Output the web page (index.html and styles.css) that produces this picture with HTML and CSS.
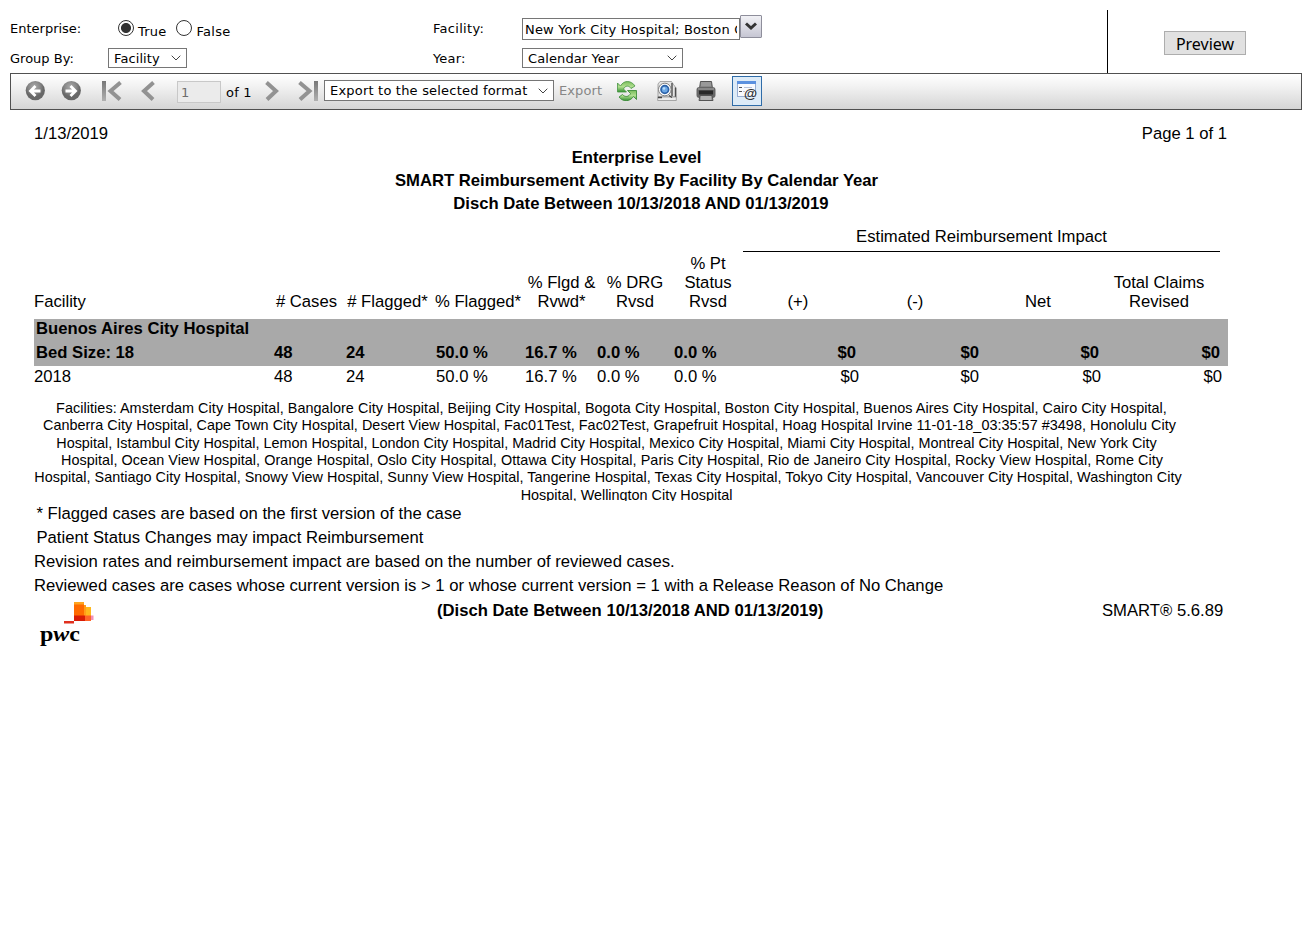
FILE: index.html
```html
<!DOCTYPE html>
<html lang="en">
<head>
<meta charset="utf-8">
<title>SMART Reimbursement Activity</title>
<link rel="stylesheet" href="styles.css">
</head>
<body>
<section class="params">
  <div class="param-col first">
    <div class="param-row"><span class="label">Enterprise:</span>
      <span class="radio on"></span><span class="radio-text">True</span>
      <span class="radio second"></span><span class="radio-text false">False</span></div>
    <div class="param-row"><span class="label">Group By:</span>
      <span class="select group">Facility<svg class="chev" viewBox="0 0 10 6"><path d="M.7.7 5 5 9.3.7"/></svg></span></div>
  </div>
  <div class="param-col middle">
    <div class="param-row"><span class="label wide">Facility:</span>
      <span class="textbox"><span class="clip">New York City Hospital; Boston City</span></span><span class="drop"><svg viewBox="0 0 14 10"><path d="M2 2.500 7 7 12 2.500" /></svg></span></div>
    <div class="param-row"><span class="label">Year:</span>
      <span class="select year">Calendar Year<svg class="chev" viewBox="0 0 10 6"><path d="M.7.7 5 5 9.3.7"/></svg></span></div>
  </div>
  <div class="param-col action"><button class="preview">Preview</button></div>
</section>

<nav class="toolbar">
  <svg class="ico back" viewBox="0 0 20 20"><defs><radialGradient id="ball" cx="45%" cy="30%"><stop offset="0" stop-color="#aaa"/><stop offset=".65" stop-color="#858585"/><stop offset="1" stop-color="#686868"/></radialGradient>
    <linearGradient id="bar" x2="0" y2="1"><stop offset="0" stop-color="#777"/><stop offset="1" stop-color="#b0b0b0"/></linearGradient></defs>
    <circle cx="10.300" cy="9.600" r="9.6" fill="url(#ball)"/><path class="arrow" d="M15.5 10H6M10.5 5 5.5 10l5 5"/></svg>
  <svg class="ico fwd" viewBox="0 0 20 20"><circle cx="10.300" cy="9.600" r="9.6" fill="url(#ball)"/><path class="arrow" d="M4.500 10H14M9.500 5l5 5-5 5"/></svg>
  <svg class="ico first-page" viewBox="0 0 20 20"><path d="M0 0h4v20H0z" fill="url(#bar)"/><path d="M18.500 1.500 8.500 10l9.500 8.500" class="thick"/></svg>
  <svg class="ico prev-page" viewBox="0 0 14 20"><path d="M12.500 1.500 3 10l9 8.500" class="thick"/></svg>
  <span class="page-box">1</span><span class="of">of 1</span>
  <svg class="ico next-page" viewBox="0 0 14 20"><path d="M1.500 1.500 11 10l-9 8.500" class="thick"/></svg>
  <svg class="ico last-page" viewBox="0 0 20 20"><path d="M16 0h4v20h-4z" fill="url(#bar)"/><path d="M1.500 1.500 11.500 10 2 18.500" class="thick"/></svg>
  <span class="select format">Export to the selected format<svg class="chev" viewBox="0 0 10 6"><path d="M.7.7 5 5 9.3.7"/></svg></span>
  <span class="export">Export</span>
  <svg class="ico refresh" viewBox="0 0 20 20"><defs><linearGradient id="grn" x2="0" y2="1"><stop offset="0" stop-color="#79bd5b"/><stop offset=".5" stop-color="#b2df91"/><stop offset="1" stop-color="#329031"/></linearGradient></defs>
    <path d="M.5 2v9h9L6.500 8C8 4.500 12 4 14 7.500L18 5C14.500-.5 7-1.500 3.500 5z" fill="url(#grn)" stroke="#479443" stroke-width=".8"/><path d="M19.500 18.500v-9h-9l3 3c-1.500 3.500-5.500 4-8 1L2 16c3.500 5 11 5 14.500-.5z" fill="url(#grn)" stroke="#31852f" stroke-width=".8"/></svg>
  <svg class="ico pv" viewBox="0 0 20 20"><path d="M3 .5h11.500l2 3L19 7v9H1V3z" fill="#e4e4e4" stroke="#888" stroke-width=".7"/><path d="M15 2v13M18.500 6.500v10" fill="none" stroke="#4d4d4d" stroke-width="1.400"/><circle cx="7.800" cy="8.500" r="6.300" fill="#fff" stroke="#777" stroke-width=".9"/><circle cx="7.800" cy="8.500" r="3.800" fill="#6ca8e6" stroke="#2c62a8" stroke-width="1.700"/><circle cx="7" cy="7.500" r="1.300" fill="#b9dcfb"/><path d="M.7 16h18.600v3.500H.7z" fill="#ececec" stroke="#888" stroke-width=".7"/><path d="M1 16.500h4M12 14.500l3 2" stroke="#444" stroke-width="1.300"/></svg>
  <svg class="ico print" viewBox="0 0 20 20"><path d="M4.500.5h11l1 7h-13z" fill="#888" stroke="#555"/><path d="M5 2h10M5 4h10" stroke="#aaa"/><rect x=".5" y="6" width="19" height="11" rx="3" fill="#666"/><path d="M2 8h16" stroke="#aaa"/><path d="M3 9.500h14v4H3z" fill="#292929"/><path d="M4 14.500h12l1 5H3z" fill="#999" stroke="#555"/><path d="M5 16h10M5 18h10" stroke="#ccc"/></svg>
  <span class="toggle"><svg viewBox="0 0 22 22"><rect x="1.500" y="1.500" width="18" height="15" fill="#f8fafe" stroke="#99afd4"/><path d="M1 1h19v3H1z" fill="#5b91df"/><path d="M3 7.500h3M3 11.500h3" stroke="#555" stroke-width="1.200"/><path d="M8 7.500h8M7 11.500h2" stroke="#b7c3db"/><text x="8" y="18" class="at">@</text></svg></span>
</nav>

<main class="report">
  <div class="dateline"><span>1/13/2019</span><span>Page 1 of 1</span></div>
  <div class="titles"><div>Enterprise Level</div><div>SMART Reimbursement Activity By Facility By Calendar Year</div><div class="period">Disch Date Between 10/13/2018 AND 01/13/2019</div></div>
  <div class="impact">Estimated Reimbursement Impact</div>
  <div class="heads">
    <span class="left">Facility</span><span># Cases</span><span># Flagged*</span><span>% Flagged*</span><span>% Flgd &amp;<br>Rvwd*</span><span>% DRG<br>Rvsd</span><span>% Pt<br>Status<br>Rvsd</span><span>(+)</span><span>(-)</span><span>Net</span><span>Total Claims<br>Revised</span>
  </div>
  <div class="band">
    <div class="hospital">Buenos Aires City Hospital</div>
    <div class="data"><span class="bed">Bed Size: 18</span><span>48</span><span>24</span><span>50.0 %</span><span>16.7 %</span><span>0.0 %</span><span>0.0 %</span><span class="num">$0</span><span class="num">$0</span><span class="num">$0</span><span class="num">$0</span></div>
  </div>
  <div class="data plain"><span>2018</span><span>48</span><span>24</span><span>50.0 %</span><span>16.7 %</span><span>0.0 %</span><span>0.0 %</span><span class="num">$0</span><span class="num">$0</span><span class="num">$0</span><span class="num">$0</span></div>
  <div class="facilities">
    <div class="l1">Facilities: Amsterdam City Hospital, Bangalore City Hospital, Beijing City Hospital, Bogota City Hospital, Boston City Hospital, Buenos Aires City Hospital, Cairo City Hospital,</div>
    <div class="l2">Canberra City Hospital, Cape Town City Hospital, Desert View Hospital, Fac01Test, Fac02Test, Grapefruit Hospital, Hoag Hospital Irvine 11-01-18_03:35:57 #3498, Honolulu City</div>
    <div class="l3">Hospital, Istambul City Hospital, Lemon Hospital, London City Hospital, Madrid City Hospital, Mexico City Hospital, Miami City Hospital, Montreal City Hospital, New York City</div>
    <div class="l4">Hospital, Ocean View Hospital, Orange Hospital, Oslo City Hospital, Ottawa City Hospital, Paris City Hospital, Rio de Janeiro City Hospital, Rocky View Hospital, Rome City</div>
    <div class="l5">Hospital, Santiago City Hospital, Snowy View Hospital, Sunny View Hospital, Tangerine Hospital, Texas City Hospital, Tokyo City Hospital, Vancouver City Hospital, Washington City</div>
    <div class="l6">Hospital, Wellington City Hospital</div>
  </div>
  <div class="notes"><p class="in">* Flagged cases are based on the first version of the case</p><p class="in">Patient Status Changes may impact Reimbursement</p><p>Revision rates and reimbursement impact are based on the number of reviewed cases.</p><p>Reviewed cases are cases whose current version is &gt; 1 or whose current version = 1 with a Release Reason of No Change</p></div>
  <footer class="foot">
    <svg class="logo" viewBox="0 0 60 46"><path d="M30 0h10v19H30z" fill="#ff6a00"/><path d="M30 0h10v2.500H30z" fill="#ffa51f"/><path d="M40 3h2v16h-2z" fill="#ff9d18"/><path d="M42 5h5v10h-5z" fill="#ffb81c"/><path d="M30 13.500h11V19H30z" fill="#d91c05"/><path d="M41 13.500h6V19h-6z" fill="#ff6328"/><path d="M47 13.500h2.500V18H47z" fill="#f391b8"/><path d="M20 19h10v2.500H20z" fill="#e0301e"/><text x="-4" y="38.500" class="pwc" textLength="40" lengthAdjust="spacingAndGlyphs">p<tspan class="slant">w</tspan>c</text></svg>
    <span class="range">(Disch Date Between 10/13/2018 AND 01/13/2019)</span>
    <span class="version">SMART® 5.6.89</span>
  </footer>
</main>
</body>
</html>
```
FILE: styles.css
```css
* { box-sizing: border-box; }
body { margin: 0; width: 1312px; height: 937px; overflow: hidden; background: #fff; color: #000; font: 13px "DejaVu Sans", sans-serif; }
.params { display: flex; height: 73px; padding: 10px 10px 0; white-space: nowrap; }
.first { width: 423px; padding-top: 3px; }
.middle { width: 674px; padding-top: 3px; }
.action { flex: 1; border-left: 1px solid #000; padding: 21px 0 0 56px; }
.param-row { display: flex; align-items: center; height: 30px; }
.label { width: 98px; flex: none; }
.middle .label { width: 89px; letter-spacing: .15px; }
.middle .wide { letter-spacing: .3px; }
.radio { width: 16px; height: 16px; margin-left: 10px; border: 1px solid #333; border-radius: 50%; background: #fff; }
.radio.on { background: radial-gradient(circle, #333 0 4.6px, #fff 5.4px); }
.radio.second { margin-left: 10px; }
.radio-text { margin: 6px 0 0 4px; line-height: 15px; letter-spacing: .2px; }
.false { letter-spacing: .3px; }
.select { display: flex; align-items: center; justify-content: space-between; height: 20px; padding: 0 5px; border: 1px solid #767676; background: #fff; line-height: 19px; white-space: nowrap; }
.group { width: 79px; letter-spacing: .1px; }
.year { width: 161px; letter-spacing: .1px; }
.chev { flex: none; width: 10px; height: 6px; fill: none; stroke: #444; stroke-width: 1; }
.textbox { width: 218px; height: 22px; margin-top: 1px; padding: 0 2px; border: 1px solid #767676; line-height: 22px; letter-spacing: .17px; }
.clip { display: block; overflow: hidden; width: 212px; }
.drop { display: flex; align-items: center; justify-content: center; width: 22px; height: 23px; margin-bottom: 4px; border: 1px solid #8e8e9b; border-radius: 1px; background: linear-gradient(#f1f1f5, #c6c6d3); }
.drop svg { width: 14px; height: 10px; fill: none; stroke: #333; stroke-width: 3; }
.preview { display: block; width: 82px; height: 24px; padding: 0; border: 1px solid #adadad; background: #e1e1e1; color: #000; font: 16px/24px "Noto Sans", sans-serif; }

.toolbar { display: flex; align-items: flex-start; width: 1292px; height: 37px; margin-left: 10px; padding-top: 7px; border: 1px solid #505050; background: linear-gradient(#fff, #f2f2f2 35%, #d5d5d5); }
.ico { flex: none; width: 20px; height: 20px; }
.arrow { fill: none; stroke: #fff; stroke-width: 2.8; }
.thick { fill: none; stroke: #929292; stroke-width: 4; }
.back { margin-left: 14px; }
.fwd { margin-left: 16px; }
.first-page { margin-left: 21px; }
.prev-page { width: 14px; margin-left: 19px; }
.page-box { width: 44px; height: 22px; margin-left: 22px; padding-left: 3px; border: 1px solid #c8c8c8; background: #ebebeb; color: #6d6d6d; line-height: 22px; }
.of { margin: 4px 0 0 5px; width: 26px; line-height: 16px; white-space: nowrap; letter-spacing: .2px; }
.next-page { width: 14px; margin-left: 13px; }
.last-page { margin-left: 19px; }
.format { width: 230px; height: 21px; margin: -1px 0 0 6px; letter-spacing: .2px; }
.export { width: 43px; margin: 1px 0 0 5px; color: #868686; line-height: 17px; letter-spacing: .1px; }
.refresh { margin-left: 15px; }
.pv { margin-left: 20px; }
.print { margin-left: 19px; }
.toggle { display: flex; align-items: center; justify-content: center; width: 30px; height: 30px; margin: -5px 0 0 16px; border: 1px solid #2f6ca8; background: #ddebf7; }
.toggle svg { width: 22px; height: 22px; overflow: visible; }
.at { font: bold 13.5px "Liberation Sans", sans-serif; fill: #333; }

.report { width: 1312px; padding-left: 34px; font: 16.67px/24px "Liberation Sans", sans-serif; white-space: nowrap; }
.dateline { display: flex; justify-content: space-between; width: 1193px; height: 36px; padding-top: 12px; }
.titles { width: 1205px; text-align: center; font-weight: bold; line-height: 23px; }
.period { padding-left: 9px; }
.impact { width: 477px; height: 37px; margin-left: 709px; padding-top: 10px; border-bottom: 1px solid #000; text-align: center; }
.heads { display: grid; grid-template-columns: 237px 71px 91px 90px 77px 70px 76px 104px 130px 116px 126px; align-items: end; height: 67px; padding-bottom: 8px; text-align: center; line-height: 19px; }
.left { text-align: left; }
.band { width: 1194px; height: 47px; background: #a9a9a9; font-weight: bold; }
.hospital { padding-left: 2px; height: 23px; line-height: 19px; }
.data { display: grid; grid-template-columns: 240px 72px 90px 89px 72px 77px 76px 106px 123px 120px 121px; line-height: 21px; }
.num { text-align: right; }
.bed { padding-left: 2px; }
.plain { grid-template-columns: 240px 72px 90px 89px 72px 77px 76px 109px 120px 122px 121px; }
.facilities { width: 1185px; height: 102px; margin-top: 12px; padding-top: 1.2px; overflow: hidden; text-align: center; font-size: 14.4px; line-height: 17.3px; }
.l1 { padding-right: 30px; letter-spacing: .058px; }
.l2 { padding-right: 34px; letter-spacing: .035px; }
.l3 { padding-right: 40px; }
.l4 { padding-right: 29px; letter-spacing: .064px; }
.l5 { padding-right: 37px; letter-spacing: .023px; }
.notes { height: 98px; padding-top: 1px; }
.notes p { margin: 0; height: 24px; }
.notes .in { padding-left: 2.5px; }
.foot { display: flex; height: 60px; }
.logo { flex: none; width: 60px; height: 46px; margin: 3px 0 0 10px; overflow: visible; }
.pwc { font: bold 22px "Liberation Serif", serif; }
.slant { font-style: italic; }
.range { width: 388px; margin-left: 333px; font-weight: bold; }
.version { margin-left: 277px; }
```
